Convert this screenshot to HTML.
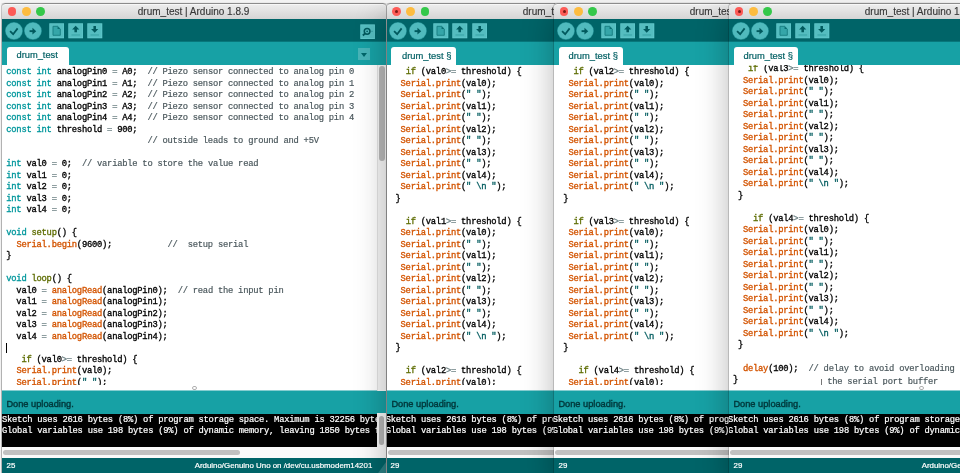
<!DOCTYPE html>
<html><head><meta charset="utf-8"><title>drum_test</title>
<style>
*{box-sizing:border-box;margin:0;padding:0}
html,body{width:960px;height:473px;overflow:hidden;background:#f6f6f6;font-family:"Liberation Sans",sans-serif}
.win{position:absolute;will-change:transform;top:3px;height:480px;background:#fff;border-radius:3.5px 3.5px 0 0;box-shadow:0 0 0 0.8px rgba(0,0,0,.2),0 10px 32px 0 rgba(0,0,0,.29)}
.tbar{position:absolute;left:0;right:0;top:0;height:16px;background:linear-gradient(#eeeeee,#d5d5d5);border-radius:3.5px 3.5px 0 0;border-top:0.6px solid #8c8c8c;box-shadow:inset 0 1px 0 #f7f7f7}
.tl{position:absolute;top:3.1px;width:8.8px;height:8.8px;border-radius:50%}
.tl.r{left:5.7px;background:#fc5b57}
.tl.y{left:19.9px;background:#fdbc40}
.tl.gr{left:34.2px;background:#34c84a}
.title{position:absolute;top:2.4px;font-size:10px;color:#383838;-webkit-text-stroke:0.15px;white-space:nowrap;line-height:12px}
.tool{position:absolute;left:0;right:0;top:16px;height:22.4px;background:#006468}
.ib{position:absolute;display:block}
.ib svg{display:block;width:100%;height:100%}
.c1{left:2.7px;top:3.0px;width:17.9px;height:17.9px}
.c2{left:22.4px;top:3.0px;width:17.9px;height:17.9px}
.s1{left:46.5px;top:4.3px;width:15.6px;height:15.6px}
.s2{left:65.85px;top:4.3px;width:15.6px;height:15.6px}
.s3{left:85.25px;top:4.3px;width:15.6px;height:15.6px}
.tabs{position:absolute;left:0;right:0;top:38px;height:24px;background:#17a1a5;border-top:1px solid #08777b}
.tab{position:absolute;left:5px;top:5.2px;height:18px;background:#fff;border-radius:3px 3px 0 0;font-size:9.3px;color:#005f63;-webkit-text-stroke:0.2px;text-align:center;line-height:17.4px}
.ed{position:absolute;left:0;right:0;top:62px;height:320px;background:#fff;overflow:hidden}
.code{position:absolute;left:4.3px;-webkit-text-stroke:0.32px;font-family:"Liberation Mono",monospace;font-size:8.8px;letter-spacing:-0.24px;color:#000}
.code .ln{height:11.52px;line-height:11.52px;white-space:pre}
.k{color:#00979c}.o{color:#d35400}.g{color:#5e6d03}.c{color:#49565b;-webkit-text-stroke:0.18px}.s{color:#005c5f}
.caret{display:inline-block;width:1px;height:10px;background:#000;vertical-align:middle}
.status{position:absolute;left:0;right:0;top:387px;height:24px;border-top:1px solid #86cdd0;background:#17a1a5;color:#00373a;-webkit-text-stroke:0.4px;font-size:9.25px;line-height:22.6px;padding-left:4.4px;padding-top:1.8px}
.con{position:absolute;left:0;right:0;top:411px;height:33px;background:#000;color:#fff;font-family:"Liberation Mono",monospace;font-size:8.8px;letter-spacing:-0.24px;overflow:hidden;padding-top:1.2px;-webkit-text-stroke:0.2px}
.con .ln{height:11.3px;line-height:11.3px;white-space:pre}
.hs{position:absolute;left:0;right:0;top:444px;height:10.8px;background:#fafafa}
.hs i{position:absolute;left:1.2px;right:10px;top:3px;height:5px;border-radius:3px;background:#c1c1c1}
.foot{position:absolute;left:0;right:0;top:454.8px;height:20px;background:#006468;color:#fff;font-size:7.9px;line-height:16px;-webkit-text-stroke:0.2px}
.fn{position:absolute;left:4.6px}
.fr{position:absolute;right:14px}
.sm{left:357.8px;top:5px;width:15.2px;height:15.4px}
.dd{position:absolute;left:355.8px;top:28.9px;width:12.3px;height:12.1px;background:#48b4b8}
.dd:after{content:"";position:absolute;left:3.3px;top:4.9px;border-left:3.6px solid transparent;border-right:3.6px solid transparent;border-top:4px solid #00666a}
.tl.dot:after{content:"";position:absolute;left:2.9px;top:2.9px;width:3px;height:3px;border-radius:50%;background:#7a1a14}
.dd{z-index:3}
.vs{position:absolute;left:374.8px;width:9.5px;top:62px;height:325.7px;background:#f7f7f7;border-left:1px solid #e3e3e3}
.vs i{position:absolute;left:1.7px;top:1.4px;width:5.2px;height:95px;border-radius:3px;background:#b9b9b9}
.vc{position:absolute;left:374.8px;width:9.5px;top:410.3px;height:33.7px;background:#f7f7f7}
.vc i{position:absolute;left:2px;top:3px;width:5.2px;height:29px;border-radius:3px;background:#b4b4b4}
.grip{position:absolute;z-index:3;left:374.3px;top:459px;width:0;height:0;border-left:10px solid transparent;border-bottom:14px solid #2b7f83}
.w1 .hs i{right:auto;width:237px}
.p{color:#6f8386}
.gd{position:absolute;top:382.6px;width:4.6px;height:4.6px;border-radius:50%;border:1px solid #b0b0b0}
.ibeam{position:absolute;left:88px;margin-top:4.2px;width:0.9px;height:6.5px;background:#777}
.w2 .code{left:3.5px}
.w4 .code{left:3.9px}
.w2 .tab,.w3 .tab,.w4 .tab{padding-left:4px;font-size:9.4px}
.w2 .ib,.w2 .tl{margin-left:-0.5px}
.w2 .tab{margin-left:-1px;padding-left:6px;width:65.4px !important}
.w1 .tab{padding-right:1.5px}
body:before{content:"";position:fixed;left:0;top:0;width:960px;height:2.6px;background:rgba(247,247,247,.75);z-index:99}
.w2 .fn{margin-left:-1px}
body:after{content:"";position:fixed;left:0;top:0;width:1.2px;height:473px;background:rgba(247,247,247,.8);z-index:99}
.w2 .con .ln,.w3 .con .ln{margin-left:-1.3px}
.w4 .con .ln{margin-left:-1px}

</style></head><body>

<div class="win w1" style="left:2px;width:384.3px">
  <div class="tbar"><i class="tl r"></i><i class="tl y"></i><i class="tl gr"></i><span class="title" style="left:135.8px">drum_test | Arduino 1.8.9</span></div>
  <div class="tool">
    <span class="ib c1"><svg viewBox="0 0 18 18"><circle cx="9" cy="9" r="8.9" fill="#2a9a9e"/><circle cx="9" cy="9" r="8.3" fill="#50babd"/><path d="M5.1 9.2 L8.2 12.3 L12.7 6.4" fill="none" stroke="#00595d" stroke-width="1.8"/></svg></span><span class="ib c2"><svg viewBox="0 0 18 18"><circle cx="9" cy="9" r="8.9" fill="#2a9a9e"/><circle cx="9" cy="9" r="8.3" fill="#50babd"/><path d="M5.6 9.2 H9.6" fill="none" stroke="#00595d" stroke-width="1.9"/><path d="M8.5 5.9 L12.3 9.2 L8.5 12.5 Z" fill="#00595d"/></svg></span>
    <span class="ib s1"><svg viewBox="0 0 16 16"><rect x="0" y="0" width="16" height="16" fill="#006064"/><rect x="0.3" y="0.3" width="15.4" height="15.4" fill="#64cdd0"/><rect x="1.1" y="1.1" width="13.8" height="13.8" fill="#55bdc0"/><path d="M4.1 3.4 H8.8 L11.6 6.2 V12.6 H4.1 Z" fill="#35a6a9" stroke="#157b7f" stroke-width="0.9"/><path d="M8.8 3.4 L11.6 6.2 H8.8 Z" fill="#0b6e72"/></svg></span><span class="ib s2"><svg viewBox="0 0 16 16"><rect x="0" y="0" width="16" height="16" fill="#006064"/><rect x="0.3" y="0.3" width="15.4" height="15.4" fill="#64cdd0"/><rect x="1.1" y="1.1" width="13.8" height="13.8" fill="#55bdc0"/><path d="M7.9 2.7 L11.6 6.6 H9.2 V9.5 H6.6 V6.6 H4.2 Z" fill="#00595d"/><path d="M3.6 12.3 H12.4" stroke="#2f9ea1" stroke-width="0.9"/></svg></span><span class="ib s3"><svg viewBox="0 0 16 16"><rect x="0" y="0" width="16" height="16" fill="#006064"/><rect x="0.3" y="0.3" width="15.4" height="15.4" fill="#64cdd0"/><rect x="1.1" y="1.1" width="13.8" height="13.8" fill="#55bdc0"/><path d="M7.9 10 L11.6 6.1 H9.2 V3.2 H6.6 V6.1 H4.2 Z" fill="#00595d"/><path d="M3.6 12.3 H12.4" stroke="#2f9ea1" stroke-width="0.9"/></svg></span>
    <span class="ib sm"><svg viewBox="0 0 16 16"><rect x="0" y="0" width="16" height="16" fill="#006064"/><rect x="0.3" y="0.3" width="15.4" height="15.4" fill="#64cdd0"/><rect x="1.1" y="1.1" width="13.8" height="13.8" fill="#55bdc0"/><circle cx="7.5" cy="7.6" r="3" fill="none" stroke="#00595d" stroke-width="1.6"/><path d="M5.4 9.8 L3 12" stroke="#00595d" stroke-width="2"/><circle cx="7.5" cy="7.6" r="0.9" fill="#00595d"/><path d="M11.6 7.6 H13.8" stroke="#1c8488" stroke-width="0.9" stroke-dasharray="0.6 0.5"/></svg></span><span class="dd"></span>
  </div>
  <div class="tabs"><div class="tab" style="width:61.9px">drum_test</div></div>
  <div class="ed"><div class="code" style="top:2.05px">
<div class="ln"><span class="k">const</span> <span class="k">int</span> analogPin0 <span class="p">=</span> A0;  <span class="c">// Piezo sensor connected to analog pin 0</span></div><div class="ln"><span class="k">const</span> <span class="k">int</span> analogPin1 <span class="p">=</span> A1;  <span class="c">// Piezo sensor connected to analog pin 1</span></div><div class="ln"><span class="k">const</span> <span class="k">int</span> analogPin2 <span class="p">=</span> A2;  <span class="c">// Piezo sensor connected to analog pin 2</span></div><div class="ln"><span class="k">const</span> <span class="k">int</span> analogPin3 <span class="p">=</span> A3;  <span class="c">// Piezo sensor connected to analog pin 3</span></div><div class="ln"><span class="k">const</span> <span class="k">int</span> analogPin4 <span class="p">=</span> A4;  <span class="c">// Piezo sensor connected to analog pin 4</span></div><div class="ln"><span class="k">const</span> <span class="k">int</span> threshold <span class="p">=</span> 900;</div><div class="ln">                            <span class="c">// outside leads to ground and +5V</span></div><div class="ln">&nbsp;</div><div class="ln"><span class="k">int</span> val0 <span class="p">=</span> 0;  <span class="c">// variable to store the value read</span></div><div class="ln"><span class="k">int</span> val1 <span class="p">=</span> 0;</div><div class="ln"><span class="k">int</span> val2 <span class="p">=</span> 0;</div><div class="ln"><span class="k">int</span> val3 <span class="p">=</span> 0;</div><div class="ln"><span class="k">int</span> val4 <span class="p">=</span> 0;</div><div class="ln">&nbsp;</div><div class="ln"><span class="k">void</span> <span class="g">setup</span>() {</div><div class="ln">  <span class="o">Serial</span><span class="o">.begin</span>(9600);           <span class="c">//  setup serial</span></div><div class="ln">}</div><div class="ln">&nbsp;</div><div class="ln"><span class="k">void</span> <span class="g">loop</span>() {</div><div class="ln">  val0 <span class="p">=</span> <span class="o">analogRead</span>(analogPin0);  <span class="c">// read the input pin</span></div><div class="ln">  val1 <span class="p">=</span> <span class="o">analogRead</span>(analogPin1);</div><div class="ln">  val2 <span class="p">=</span> <span class="o">analogRead</span>(analogPin2);</div><div class="ln">  val3 <span class="p">=</span> <span class="o">analogRead</span>(analogPin3);</div><div class="ln">  val4 <span class="p">=</span> <span class="o">analogRead</span>(analogPin4);</div><div class="ln"><span class="caret"></span></div><div class="ln">   <span class="g">if</span> (val0<span class="p">&gt;=</span> threshold) {</div><div class="ln">  <span class="o">Serial</span><span class="o">.print</span>(val0);</div><div class="ln">  <span class="o">Serial</span><span class="o">.print</span>(<span class="s">" "</span>);</div>
  </div></div>
  <i class="gd" style="left:190.3px"></i><div class="status">Done uploading.</div>
  <div class="con"><div class="ln">Sketch uses 2616 bytes (8%) of program storage space. Maximum is 32256 bytes.</div><div class="ln">Global variables use 198 bytes (9%) of dynamic memory, leaving 1850 bytes for local variables. Maximum is 2048 bytes.</div></div>
  <div class="hs"><i></i></div><div class="vs"><i></i></div><div class="vc"><i></i></div><div class="grip"></div>
  <div class="foot"><span class="fn">25</span><span class="fr">Arduino/Genuino Uno on /dev/cu.usbmodem14201</span></div>
</div>
<div class="win w2" style="left:387px;width:384.3px">
  <div class="tbar"><i class="tl r dot"></i><i class="tl y"></i><i class="tl gr"></i><span class="title" style="left:135.8px">drum_test | Arduino 1.8.9</span></div>
  <div class="tool">
    <span class="ib c1"><svg viewBox="0 0 18 18"><circle cx="9" cy="9" r="8.9" fill="#2a9a9e"/><circle cx="9" cy="9" r="8.3" fill="#50babd"/><path d="M5.1 9.2 L8.2 12.3 L12.7 6.4" fill="none" stroke="#00595d" stroke-width="1.8"/></svg></span><span class="ib c2"><svg viewBox="0 0 18 18"><circle cx="9" cy="9" r="8.9" fill="#2a9a9e"/><circle cx="9" cy="9" r="8.3" fill="#50babd"/><path d="M5.6 9.2 H9.6" fill="none" stroke="#00595d" stroke-width="1.9"/><path d="M8.5 5.9 L12.3 9.2 L8.5 12.5 Z" fill="#00595d"/></svg></span>
    <span class="ib s1"><svg viewBox="0 0 16 16"><rect x="0" y="0" width="16" height="16" fill="#006064"/><rect x="0.3" y="0.3" width="15.4" height="15.4" fill="#64cdd0"/><rect x="1.1" y="1.1" width="13.8" height="13.8" fill="#55bdc0"/><path d="M4.1 3.4 H8.8 L11.6 6.2 V12.6 H4.1 Z" fill="#35a6a9" stroke="#157b7f" stroke-width="0.9"/><path d="M8.8 3.4 L11.6 6.2 H8.8 Z" fill="#0b6e72"/></svg></span><span class="ib s2"><svg viewBox="0 0 16 16"><rect x="0" y="0" width="16" height="16" fill="#006064"/><rect x="0.3" y="0.3" width="15.4" height="15.4" fill="#64cdd0"/><rect x="1.1" y="1.1" width="13.8" height="13.8" fill="#55bdc0"/><path d="M7.9 2.7 L11.6 6.6 H9.2 V9.5 H6.6 V6.6 H4.2 Z" fill="#00595d"/><path d="M3.6 12.3 H12.4" stroke="#2f9ea1" stroke-width="0.9"/></svg></span><span class="ib s3"><svg viewBox="0 0 16 16"><rect x="0" y="0" width="16" height="16" fill="#006064"/><rect x="0.3" y="0.3" width="15.4" height="15.4" fill="#64cdd0"/><rect x="1.1" y="1.1" width="13.8" height="13.8" fill="#55bdc0"/><path d="M7.9 10 L11.6 6.1 H9.2 V3.2 H6.6 V6.1 H4.2 Z" fill="#00595d"/><path d="M3.6 12.3 H12.4" stroke="#2f9ea1" stroke-width="0.9"/></svg></span>
    
  </div>
  <div class="tabs"><div class="tab" style="width:64.4px">drum_test §</div></div>
  <div class="ed"><div class="code" style="top:2.05px">
<div class="ln">   <span class="g">if</span> (val0<span class="p">&gt;=</span> threshold) {</div><div class="ln">  <span class="o">Serial</span><span class="o">.print</span>(val0);</div><div class="ln">  <span class="o">Serial</span><span class="o">.print</span>(<span class="s">" "</span>);</div><div class="ln">  <span class="o">Serial</span><span class="o">.print</span>(val1);</div><div class="ln">  <span class="o">Serial</span><span class="o">.print</span>(<span class="s">" "</span>);</div><div class="ln">  <span class="o">Serial</span><span class="o">.print</span>(val2);</div><div class="ln">  <span class="o">Serial</span><span class="o">.print</span>(<span class="s">" "</span>);</div><div class="ln">  <span class="o">Serial</span><span class="o">.print</span>(val3);</div><div class="ln">  <span class="o">Serial</span><span class="o">.print</span>(<span class="s">" "</span>);</div><div class="ln">  <span class="o">Serial</span><span class="o">.print</span>(val4);</div><div class="ln">  <span class="o">Serial</span><span class="o">.print</span>(<span class="s">" \n "</span>);</div><div class="ln"> }</div><div class="ln">&nbsp;</div><div class="ln">   <span class="g">if</span> (val1<span class="p">&gt;=</span> threshold) {</div><div class="ln">  <span class="o">Serial</span><span class="o">.print</span>(val0);</div><div class="ln">  <span class="o">Serial</span><span class="o">.print</span>(<span class="s">" "</span>);</div><div class="ln">  <span class="o">Serial</span><span class="o">.print</span>(val1);</div><div class="ln">  <span class="o">Serial</span><span class="o">.print</span>(<span class="s">" "</span>);</div><div class="ln">  <span class="o">Serial</span><span class="o">.print</span>(val2);</div><div class="ln">  <span class="o">Serial</span><span class="o">.print</span>(<span class="s">" "</span>);</div><div class="ln">  <span class="o">Serial</span><span class="o">.print</span>(val3);</div><div class="ln">  <span class="o">Serial</span><span class="o">.print</span>(<span class="s">" "</span>);</div><div class="ln">  <span class="o">Serial</span><span class="o">.print</span>(val4);</div><div class="ln">  <span class="o">Serial</span><span class="o">.print</span>(<span class="s">" \n "</span>);</div><div class="ln"> }</div><div class="ln">&nbsp;</div><div class="ln">   <span class="g">if</span> (val2<span class="p">&gt;=</span> threshold) {</div><div class="ln">  <span class="o">Serial</span><span class="o">.print</span>(val0);</div>
  </div></div>
  <div class="status">Done uploading.</div>
  <div class="con"><div class="ln">Sketch uses 2616 bytes (8%) of program storage space. Maximum is 32256 bytes.</div><div class="ln">Global variables use 198 bytes (9%) of dynamic memory, leaving 1850 bytes for local variables. Maximum is 2048 bytes.</div></div>
  <div class="hs"><i></i></div>
  <div class="foot"><span class="fn">29</span><span class="fr">Arduino/Genuino Uno on /dev/cu.usbmodem14201</span></div>
</div>
<div class="win w3" style="left:554px;width:384.3px">
  <div class="tbar"><i class="tl r dot"></i><i class="tl y"></i><i class="tl gr"></i><span class="title" style="left:135.8px">drum_test | Arduino 1.8.9</span></div>
  <div class="tool">
    <span class="ib c1"><svg viewBox="0 0 18 18"><circle cx="9" cy="9" r="8.9" fill="#2a9a9e"/><circle cx="9" cy="9" r="8.3" fill="#50babd"/><path d="M5.1 9.2 L8.2 12.3 L12.7 6.4" fill="none" stroke="#00595d" stroke-width="1.8"/></svg></span><span class="ib c2"><svg viewBox="0 0 18 18"><circle cx="9" cy="9" r="8.9" fill="#2a9a9e"/><circle cx="9" cy="9" r="8.3" fill="#50babd"/><path d="M5.6 9.2 H9.6" fill="none" stroke="#00595d" stroke-width="1.9"/><path d="M8.5 5.9 L12.3 9.2 L8.5 12.5 Z" fill="#00595d"/></svg></span>
    <span class="ib s1"><svg viewBox="0 0 16 16"><rect x="0" y="0" width="16" height="16" fill="#006064"/><rect x="0.3" y="0.3" width="15.4" height="15.4" fill="#64cdd0"/><rect x="1.1" y="1.1" width="13.8" height="13.8" fill="#55bdc0"/><path d="M4.1 3.4 H8.8 L11.6 6.2 V12.6 H4.1 Z" fill="#35a6a9" stroke="#157b7f" stroke-width="0.9"/><path d="M8.8 3.4 L11.6 6.2 H8.8 Z" fill="#0b6e72"/></svg></span><span class="ib s2"><svg viewBox="0 0 16 16"><rect x="0" y="0" width="16" height="16" fill="#006064"/><rect x="0.3" y="0.3" width="15.4" height="15.4" fill="#64cdd0"/><rect x="1.1" y="1.1" width="13.8" height="13.8" fill="#55bdc0"/><path d="M7.9 2.7 L11.6 6.6 H9.2 V9.5 H6.6 V6.6 H4.2 Z" fill="#00595d"/><path d="M3.6 12.3 H12.4" stroke="#2f9ea1" stroke-width="0.9"/></svg></span><span class="ib s3"><svg viewBox="0 0 16 16"><rect x="0" y="0" width="16" height="16" fill="#006064"/><rect x="0.3" y="0.3" width="15.4" height="15.4" fill="#64cdd0"/><rect x="1.1" y="1.1" width="13.8" height="13.8" fill="#55bdc0"/><path d="M7.9 10 L11.6 6.1 H9.2 V3.2 H6.6 V6.1 H4.2 Z" fill="#00595d"/><path d="M3.6 12.3 H12.4" stroke="#2f9ea1" stroke-width="0.9"/></svg></span>
    
  </div>
  <div class="tabs"><div class="tab" style="width:64.4px">drum_test §</div></div>
  <div class="ed"><div class="code" style="top:2.05px">
<div class="ln">   <span class="g">if</span> (val2<span class="p">&gt;=</span> threshold) {</div><div class="ln">  <span class="o">Serial</span><span class="o">.print</span>(val0);</div><div class="ln">  <span class="o">Serial</span><span class="o">.print</span>(<span class="s">" "</span>);</div><div class="ln">  <span class="o">Serial</span><span class="o">.print</span>(val1);</div><div class="ln">  <span class="o">Serial</span><span class="o">.print</span>(<span class="s">" "</span>);</div><div class="ln">  <span class="o">Serial</span><span class="o">.print</span>(val2);</div><div class="ln">  <span class="o">Serial</span><span class="o">.print</span>(<span class="s">" "</span>);</div><div class="ln">  <span class="o">Serial</span><span class="o">.print</span>(val3);</div><div class="ln">  <span class="o">Serial</span><span class="o">.print</span>(<span class="s">" "</span>);</div><div class="ln">  <span class="o">Serial</span><span class="o">.print</span>(val4);</div><div class="ln">  <span class="o">Serial</span><span class="o">.print</span>(<span class="s">" \n "</span>);</div><div class="ln"> }</div><div class="ln">&nbsp;</div><div class="ln">   <span class="g">if</span> (val3<span class="p">&gt;=</span> threshold) {</div><div class="ln">  <span class="o">Serial</span><span class="o">.print</span>(val0);</div><div class="ln">  <span class="o">Serial</span><span class="o">.print</span>(<span class="s">" "</span>);</div><div class="ln">  <span class="o">Serial</span><span class="o">.print</span>(val1);</div><div class="ln">  <span class="o">Serial</span><span class="o">.print</span>(<span class="s">" "</span>);</div><div class="ln">  <span class="o">Serial</span><span class="o">.print</span>(val2);</div><div class="ln">  <span class="o">Serial</span><span class="o">.print</span>(<span class="s">" "</span>);</div><div class="ln">  <span class="o">Serial</span><span class="o">.print</span>(val3);</div><div class="ln">  <span class="o">Serial</span><span class="o">.print</span>(<span class="s">" "</span>);</div><div class="ln">  <span class="o">Serial</span><span class="o">.print</span>(val4);</div><div class="ln">  <span class="o">Serial</span><span class="o">.print</span>(<span class="s">" \n "</span>);</div><div class="ln"> }</div><div class="ln">&nbsp;</div><div class="ln">    <span class="g">if</span> (val4<span class="p">&gt;=</span> threshold) {</div><div class="ln">  <span class="o">Serial</span><span class="o">.print</span>(val0);</div>
  </div></div>
  <div class="status">Done uploading.</div>
  <div class="con"><div class="ln">Sketch uses 2616 bytes (8%) of program storage space. Maximum is 32256 bytes.</div><div class="ln">Global variables use 198 bytes (9%) of dynamic memory, leaving 1850 bytes for local variables. Maximum is 2048 bytes.</div></div>
  <div class="hs"><i></i></div>
  <div class="foot"><span class="fn">29</span><span class="fr">Arduino/Genuino Uno on /dev/cu.usbmodem14201</span></div>
</div>
<div class="win w4" style="left:729px;width:384.3px">
  <div class="tbar"><i class="tl r dot"></i><i class="tl y"></i><i class="tl gr"></i><span class="title" style="left:135.8px">drum_test | Arduino 1.8.9</span></div>
  <div class="tool">
    <span class="ib c1"><svg viewBox="0 0 18 18"><circle cx="9" cy="9" r="8.9" fill="#2a9a9e"/><circle cx="9" cy="9" r="8.3" fill="#50babd"/><path d="M5.1 9.2 L8.2 12.3 L12.7 6.4" fill="none" stroke="#00595d" stroke-width="1.8"/></svg></span><span class="ib c2"><svg viewBox="0 0 18 18"><circle cx="9" cy="9" r="8.9" fill="#2a9a9e"/><circle cx="9" cy="9" r="8.3" fill="#50babd"/><path d="M5.6 9.2 H9.6" fill="none" stroke="#00595d" stroke-width="1.9"/><path d="M8.5 5.9 L12.3 9.2 L8.5 12.5 Z" fill="#00595d"/></svg></span>
    <span class="ib s1"><svg viewBox="0 0 16 16"><rect x="0" y="0" width="16" height="16" fill="#006064"/><rect x="0.3" y="0.3" width="15.4" height="15.4" fill="#64cdd0"/><rect x="1.1" y="1.1" width="13.8" height="13.8" fill="#55bdc0"/><path d="M4.1 3.4 H8.8 L11.6 6.2 V12.6 H4.1 Z" fill="#35a6a9" stroke="#157b7f" stroke-width="0.9"/><path d="M8.8 3.4 L11.6 6.2 H8.8 Z" fill="#0b6e72"/></svg></span><span class="ib s2"><svg viewBox="0 0 16 16"><rect x="0" y="0" width="16" height="16" fill="#006064"/><rect x="0.3" y="0.3" width="15.4" height="15.4" fill="#64cdd0"/><rect x="1.1" y="1.1" width="13.8" height="13.8" fill="#55bdc0"/><path d="M7.9 2.7 L11.6 6.6 H9.2 V9.5 H6.6 V6.6 H4.2 Z" fill="#00595d"/><path d="M3.6 12.3 H12.4" stroke="#2f9ea1" stroke-width="0.9"/></svg></span><span class="ib s3"><svg viewBox="0 0 16 16"><rect x="0" y="0" width="16" height="16" fill="#006064"/><rect x="0.3" y="0.3" width="15.4" height="15.4" fill="#64cdd0"/><rect x="1.1" y="1.1" width="13.8" height="13.8" fill="#55bdc0"/><path d="M7.9 10 L11.6 6.1 H9.2 V3.2 H6.6 V6.1 H4.2 Z" fill="#00595d"/><path d="M3.6 12.3 H12.4" stroke="#2f9ea1" stroke-width="0.9"/></svg></span>
    
  </div>
  <div class="tabs"><div class="tab" style="width:64.4px">drum_test §</div></div>
  <div class="ed"><div class="code" style="top:-0.9px">
<div class="ln">   <span class="g">if</span> (val3<span class="p">&gt;=</span> threshold) {</div><div class="ln">  <span class="o">Serial</span><span class="o">.print</span>(val0);</div><div class="ln">  <span class="o">Serial</span><span class="o">.print</span>(<span class="s">" "</span>);</div><div class="ln">  <span class="o">Serial</span><span class="o">.print</span>(val1);</div><div class="ln">  <span class="o">Serial</span><span class="o">.print</span>(<span class="s">" "</span>);</div><div class="ln">  <span class="o">Serial</span><span class="o">.print</span>(val2);</div><div class="ln">  <span class="o">Serial</span><span class="o">.print</span>(<span class="s">" "</span>);</div><div class="ln">  <span class="o">Serial</span><span class="o">.print</span>(val3);</div><div class="ln">  <span class="o">Serial</span><span class="o">.print</span>(<span class="s">" "</span>);</div><div class="ln">  <span class="o">Serial</span><span class="o">.print</span>(val4);</div><div class="ln">  <span class="o">Serial</span><span class="o">.print</span>(<span class="s">" \n "</span>);</div><div class="ln"> }</div><div class="ln">&nbsp;</div><div class="ln">    <span class="g">if</span> (val4<span class="p">&gt;=</span> threshold) {</div><div class="ln">  <span class="o">Serial</span><span class="o">.print</span>(val0);</div><div class="ln">  <span class="o">Serial</span><span class="o">.print</span>(<span class="s">" "</span>);</div><div class="ln">  <span class="o">Serial</span><span class="o">.print</span>(val1);</div><div class="ln">  <span class="o">Serial</span><span class="o">.print</span>(<span class="s">" "</span>);</div><div class="ln">  <span class="o">Serial</span><span class="o">.print</span>(val2);</div><div class="ln">  <span class="o">Serial</span><span class="o">.print</span>(<span class="s">" "</span>);</div><div class="ln">  <span class="o">Serial</span><span class="o">.print</span>(val3);</div><div class="ln">  <span class="o">Serial</span><span class="o">.print</span>(<span class="s">" "</span>);</div><div class="ln">  <span class="o">Serial</span><span class="o">.print</span>(val4);</div><div class="ln">  <span class="o">Serial</span><span class="o">.print</span>(<span class="s">" \n "</span>);</div><div class="ln"> }</div><div class="ln">&nbsp;</div><div class="ln">  <span class="o">delay</span>(100);  <span class="c">// delay to avoid overloading the</span></div><div class="ln">}                 <i class="ibeam"></i><span class="c" style="position:relative;left:3.6px;top:2px">the serial port buffer</span></div>
  </div></div>
  <i class="gd" style="left:190.3px"></i><div class="status">Done uploading.</div>
  <div class="con"><div class="ln">Sketch uses 2616 bytes (8%) of program storage space. Maximum is 32256 bytes.</div><div class="ln">Global variables use 198 bytes (9%) of dynamic memory, leaving 1850 bytes for local variables. Maximum is 2048 bytes.</div></div>
  <div class="hs"><i></i></div>
  <div class="foot"><span class="fn">29</span><span class="fr">Arduino/Genuino Uno on /dev/cu.usbmodem14201</span></div>
</div>
</body></html>
